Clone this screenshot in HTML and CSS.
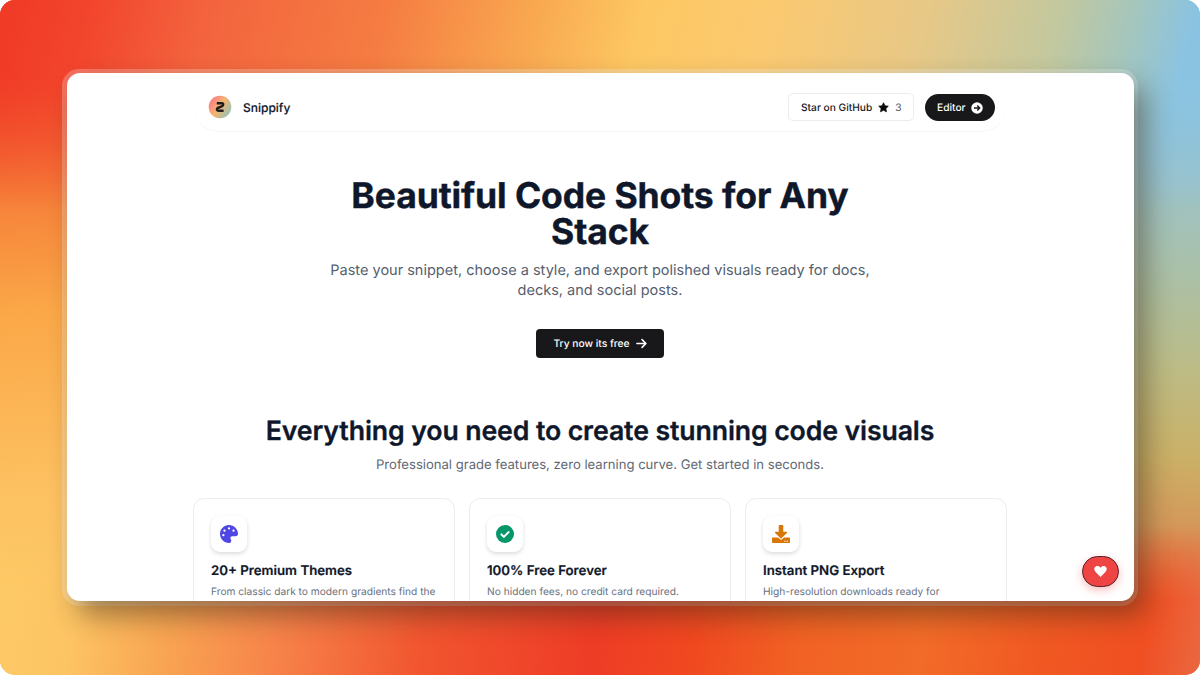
FILE: index.html
```html
<!DOCTYPE html>
<html lang="en">
<head>
<meta charset="utf-8">
<title>Snippify</title>
<link rel="stylesheet" href="styles.css">
</head>
<body>
<div class="backdrop">
  <div class="wash wash-left"></div>
  <div class="wash wash-right"></div>
  <div class="wash wash-bottom"></div>
  <div class="wash wash-top"></div>
  <div class="frame">
  <main class="window">
    <header class="nav">
      <div class="brand">
        <svg class="logo" viewBox="0 0 24 24"><defs><linearGradient id="lg" x1="0" y1="0.1" x2="1" y2="0.8"><stop offset="0" stop-color="#fb6f92"/><stop offset=".5" stop-color="#f6b46c"/><stop offset="1" stop-color="#8cc5c0"/></linearGradient></defs><circle cx="12" cy="12" r="11.3" fill="url(#lg)"/><path d="M8.800 8.300H13.600Q16 8.400 14.800 10.400Q13.900 11.600 11.600 12.200Q8.500 13.200 9 14.900Q9.300 15.700 10.600 15.700H15.600" fill="none" stroke="#1d1d1f" stroke-width="2.500" stroke-linejoin="round"/></svg>
        <span class="brand-name">Snippify</span>
      </div>
      <div class="actions">
        <a class="star-btn"><span>Star on GitHub</span><svg class="star" viewBox="0 0 24 24"><path d="M12 1.500l3.200 6.600 7.300 1-5.300 5.100 1.300 7.300L12 18l-6.500 3.500 1.300-7.300L1.500 9.100l7.300-1z" fill="#09090b" stroke="#09090b" stroke-linejoin="round" stroke-width="1.500"/></svg><span class="count">3</span></a>
        <a class="editor-btn"><span>Editor</span><svg class="go" viewBox="0 0 24 24"><circle cx="12" cy="12" r="11.500" fill="#fff"/><path d="M6 12H17M12.500 7L17.500 12L12.500 17" fill="none" stroke="#18181b" stroke-width="2.600"/></svg></a>
      </div>
    </header>
    <section class="hero">
      <h1>Beautiful Code Shots for Any Stack</h1>
      <p>Paste your snippet, choose a style, and export polished visuals ready for docs,<br>decks, and social posts.</p>
      <a class="cta"><span>Try now its free</span><svg class="arrow" viewBox="0 0 12 12"><path d="M1 6H10.400M6.600 1.800L10.800 6L6.600 10.200" fill="none" stroke="#fff" stroke-width="1.700" stroke-linecap="round" stroke-linejoin="round"/></svg></a>
    </section>
    <section class="features">
      <h2>Everything you need to create stunning code visuals</h2>
      <p class="lead">Professional grade features, zero learning curve. Get started in seconds.</p>
      <div class="cards">
        <article class="card">
          <div class="tile"><svg viewBox="0 0 512 512"><path fill="#4f46e5" d="M512 256c0 .9 0 1.800 0 2.700c-.4 36.500-33.600 61.300-70.100 61.300H344c-26.500 0-48 21.500-48 48c0 3.400 .4 6.700 1 9.900c2.100 10.200 6.500 20 10.800 29.900c6.100 13.800 12.100 27.500 12.100 42c0 31.800-21.600 60.700-53.400 62c-3.500 .1-7 .2-10.600 .2C114.600 512 0 397.400 0 256S114.600 0 256 0S512 114.600 512 256z"/><g fill="#fff"><circle cx="96" cy="288" r="32"/><circle cx="128" cy="160" r="32"/><circle cx="256" cy="96" r="32"/><circle cx="384" cy="160" r="32"/></g></svg></div>
          <h3>20+ Premium Themes</h3>
          <p>From classic dark to modern gradients find the</p>
        </article>
        <article class="card">
          <div class="tile"><svg viewBox="0 0 512 512"><circle cx="256" cy="256" r="256" fill="#059669"/><path d="M155 268L224 337L358 203" fill="none" stroke="#fff" stroke-width="58" stroke-linecap="round" stroke-linejoin="round"/></svg></div>
          <h3>100% Free Forever</h3>
          <p>No hidden fees, no credit card required.</p>
        </article>
        <article class="card">
          <div class="tile"><svg viewBox="0 0 512 512"><path fill="#d97706" d="M216 0h80c13.300 0 24 10.700 24 24v168h87.700c17.800 0 26.700 21.500 14.100 34.100L269.700 378.300c-7.500 7.500-19.800 7.500-27.300 0L90.100 226.100c-12.600-12.600-3.700-34.100 14.100-34.100H192V24c0-13.300 10.700-24 24-24zm296 376v112c0 13.300-10.700 24-24 24H24c-13.300 0-24-10.700-24-24V376c0-13.300 10.700-24 24-24h146.700l49 49c20.100 20.100 52.500 20.100 72.600 0l49-49H488c13.300 0 24 10.700 24 24z"/><g fill="#fff"><circle cx="368" cy="464" r="20"/><circle cx="432" cy="464" r="20"/></g></svg></div>
          <h3>Instant PNG Export</h3>
          <p>High-resolution downloads ready for</p>
        </article>
      </div>
    </section>
    <a class="heart-btn"><svg viewBox="0 0 24 24"><path fill="#fff" d="M12 22L2.600 12.500C-.5 9.300 0 4.600 3.200 2.900C6.200 1.200 9.500 2 12 5C14.500 2 17.800 1.200 20.800 2.900C24 4.600 24.500 9.300 21.400 12.500Z"/></svg></a>
  </main>
  </div>
</div>
</body>
</html>
```
FILE: styles.css
```css
* { box-sizing: border-box; }
body { margin: 0; background: #fff; font-family: Inter, "Liberation Sans", sans-serif; color: #0f172a; text-rendering: geometricPrecision; }
h1, h2, h3, p { margin: 0; }
.backdrop { position: relative; width: 1200px; height: 675px; padding: 69px 62px; border-radius: 15px; overflow: hidden; }
.wash { position: absolute; }
.wash-top { left: 0; right: 0; top: 0; height: 210px; background: linear-gradient(103deg, #f03a26 0, #f2442c 7%, #f3643e 17%, #f57c42 31%, #f9a850 43%, #fdc863 52%, #fbc970 62%, #e8c886 74%, #c3c89e 85%, #a5c6bc 91%, #8ac3e2 96%); mask-image: linear-gradient(#000 36%, transparent); }
.wash-bottom { left: 0; right: 0; bottom: 0; height: 150px; background: linear-gradient(98deg, #fdca66 0, #fdc464 7%, #f9a853 14%, #f7834a 24%, #f1552f 36%, #ee3c26 50%, #f04820 58%, #f16224 67%, #f26b28 77%, #f05822 87%, #f04f22 95%, #ea6840 100%); mask-image: linear-gradient(0deg, #000 49%, transparent); }
.wash-left { left: 0; top: 0; bottom: 0; width: 600px; background: linear-gradient(176deg, #f03a26 0, #f1502c 10%, #f57836 24%, #fba848 44%, #fdc262 70%, #fdca66 90%); }
.wash-right { right: 0; top: 0; bottom: 0; width: 600px; background: linear-gradient(182deg, #8ac3e2 0, #90c4d8 14%, #9cc3c8 26%, #abc0a6 40%, #bcbc86 53%, #cbb066 66%, #d69558 77%, #e2784a 87%, #ef5526 100%); }
.frame { position: relative; width: 1076px; height: 537px; padding: 4px 4px 5px 5px; border-radius: 17px; background: rgba(255,255,255,.24); }
.window { position: relative; width: 1067px; height: 528px; padding: 0 127px 0 126px; border-radius: 13px; background: #fff; box-shadow: 11px 14px 28px rgba(50,40,20,.48); }
.nav { display: flex; justify-content: space-between; align-items: center; width: 814px; height: 59px; padding: 10px 12px 0 15px; border-bottom: 1px solid #f6f6f7; border-radius: 0 0 26px 26px; }
.brand, .actions, .star-btn, .editor-btn { display: flex; align-items: center; }
.logo { width: 24px; height: 24px; }
.brand { gap: 11px; }
.brand-name { font-size: 12px; font-weight: 500; -webkit-text-stroke: .15px #0f172a; }
.actions { gap: 11px; font-size: 10.200px; font-weight: 500; }
.star-btn { width: 126px; height: 28px; padding: 1px 0 0 12px; border: 1px solid #ececee; border-radius: 5px; gap: 6px; color: #18181b; }
.star { width: 11px; height: 11px; }
.count { color: #52525b; font-weight: 400; }
.editor-btn { height: 27px; width: 70px; padding: 1px 0 0 12px; gap: 6px; color: #fff; background: #18181b; border-radius: 14px; }
.go { width: 12px; height: 12px; }
.hero { display: flex; flex-direction: column; align-items: center; width: 814px; padding-top: 46px; text-align: center; }
.hero h1 { width: 560px; font-size: 35.500px; line-height: 35.500px; font-weight: 700; letter-spacing: -.1px; -webkit-text-stroke: .4px #0f172a; }
.hero p { margin-top: 10.600px; font-size: 14.530px; line-height: 20.300px; color: #55606e; white-space: nowrap; }
.cta { display: flex; align-items: center; justify-content: center; gap: 6px; width: 128px; height: 29px; margin-top: 29px; border-radius: 4px; background: #18181b; color: #fff; font-size: 10.250px; font-weight: 500; }
.arrow { width: 11px; height: 11px; }
.features { margin-top: 56px; text-align: center; }
.features h2 { width: 814px; font-size: 26.700px; line-height: 34px; font-weight: 600; letter-spacing: -.12px; white-space: nowrap; -webkit-text-stroke: .3px #0f172a; }
.lead { margin-top: 7px; font-size: 13.080px; line-height: 20px; color: #5f6875; }
.cards { display: grid; grid-template-columns: repeat(3, 262px); gap: 14px; width: 814px; height: 103px; margin-top: 22.800px; overflow: hidden; text-align: left; }
.card { height: 160px; padding: 17px; border: 1px solid #ececee; border-radius: 11px; }
.tile { display: flex; align-items: center; justify-content: center; width: 36px; height: 36px; border-radius: 9px; background: #fff; box-shadow: 0 2px 4px rgba(0,0,0,.14); }
.tile svg { width: 18px; height: 18px; }
.card h3 { margin-top: 9px; font-size: 13.250px; line-height: 20px; font-weight: 600; -webkit-text-stroke: .2px #0f172a; }
.card p { margin-top: 2px; font-size: 10.200px; line-height: 18px; color: #6b7280; white-space: nowrap; }
.heart-btn { position: absolute; right: 15px; bottom: 14px; display: flex; align-items: center; justify-content: center; width: 37px; height: 31px; border: 1px solid #5a2028; border-radius: 16px; background: #ef4444; box-shadow: 0 3px 8px rgba(239,68,68,.35); }
.heart-btn svg { width: 13px; height: 13px; }
```
